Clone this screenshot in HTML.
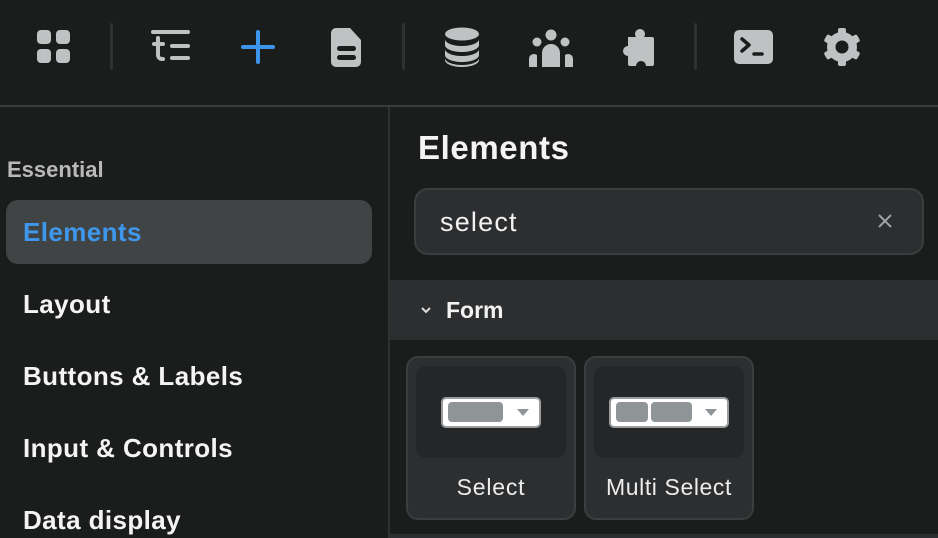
<!DOCTYPE html>
<html><head><meta charset="utf-8"><style>
*{margin:0;padding:0;box-sizing:border-box}
body{width:938px;height:538px;overflow:hidden;background:#1b1c1c;font-family:"Liberation Sans",sans-serif;color:#f2f2f2;position:relative}
.a{position:absolute}
.div{position:absolute;top:23px;width:3px;height:47px;background:#2f3132;border-radius:2px}
.side{position:absolute;left:23px;font-size:26px;font-weight:bold;color:#f4f4f4;line-height:30px;letter-spacing:0.4px}
svg{position:absolute}
</style></head><body>
<div class="a" style="left:0;top:105px;width:938px;height:2px;background:#3a3b3c"></div>
<div class="div" style="left:110px"></div>
<div class="div" style="left:402px"></div>
<div class="div" style="left:694px"></div>
<svg style="left:36px;top:29px" width="36" height="36" viewBox="0 0 36 36" fill="#bfc1c2"><rect x="1" y="1" width="14" height="14" rx="4"/><rect x="20" y="1" width="14" height="14" rx="4"/><rect x="1" y="20" width="14" height="14" rx="4"/><rect x="20" y="20" width="14" height="14" rx="4"/></svg>
<svg style="left:150px;top:28px" width="40" height="36" viewBox="0 0 40 36" fill="none" stroke="#bfc1c2" stroke-width="4" stroke-linecap="round"><path d="M3 4H38"/><path d="M8 10V27a4 4 0 0 0 4 4H13"/><path d="M4 16H13"/><path d="M22 18H38"/><path d="M22 30H38"/></svg>
<svg style="left:240px;top:29px" width="36" height="36" viewBox="0 0 36 36" stroke="#3d95ea" stroke-width="4" stroke-linecap="round"><path d="M18 3V33M3 18H33"/></svg>
<svg style="left:330px;top:27px" width="34" height="42" viewBox="0 0 34 42"><path d="M6 1H20L31 13V35a5 5 0 0 1-5 5H6a5 5 0 0 1-5-5V6a5 5 0 0 1 5-5z" fill="#bfc1c2"/><rect x="7" y="19" width="19" height="5" rx="2.5" fill="#1b1c1c"/><rect x="7" y="28" width="19" height="5" rx="2.5" fill="#1b1c1c"/></svg>
<svg style="left:444px;top:27px" width="36" height="40" viewBox="0 0 36 40" fill="#bfc1c2"><ellipse cx="18" cy="7" rx="17" ry="6.5"/><path d="M1 12c0 4 8 7 17 7s17-3 17-7v6c0 4-8 7-17 7S1 22 1 18z"/><path d="M1 22c0 4 8 7 17 7s17-3 17-7v6c0 4-8 7-17 7S1 32 1 28z"/><path d="M1 31c0 4 8 7 17 7s17-3 17-7v2c0 4-8 7-17 7S1 37 1 33z"/></svg>
<svg style="left:528px;top:29px" width="46" height="38" viewBox="0 0 46 38" fill="#bfc1c2"><circle cx="23" cy="6" r="5.5"/><circle cx="9" cy="13" r="4.5"/><circle cx="37" cy="13" r="4.5"/><path d="M14 38V24a9 9 0 0 1 18 0V38z"/><path d="M1 38V30a5 5 0 0 1 8-4V38z"/><path d="M45 38V30a5 5 0 0 0-8-4V38z"/></svg>
<svg style="left:616px;top:27px" width="42" height="42" viewBox="0 0 42 42" fill="#bfc1c2"><path d="M12 10H20A5 5 0 1 1 28 10H36a2 2 0 0 1 2 2V37a2 2 0 0 1-2 2H30A5 5 0 1 0 20 39H14a2 2 0 0 1-2-2V29A5 5 0 1 1 12 19z"/></svg>
<svg style="left:734px;top:30px" width="40" height="34" viewBox="0 0 40 34"><rect x="0" y="0" width="39" height="34" rx="5" fill="#bfc1c2"/><path d="M8 9L15 15L8 21" stroke="#1b1c1c" stroke-width="3.5" fill="none" stroke-linecap="round" stroke-linejoin="round"/><path d="M20 24H28" stroke="#1b1c1c" stroke-width="3.5" stroke-linecap="round"/></svg>
<svg style="left:822px;top:27px" width="40" height="40" viewBox="0 0 40 40"><g fill="#bfc1c2"><circle cx="20" cy="20" r="15"/><g><rect x="16" y="1" width="8" height="8" rx="2"/><rect x="16" y="31" width="8" height="8" rx="2"/><rect x="16" y="1" width="8" height="8" rx="2" transform="rotate(60 20 20)"/><rect x="16" y="1" width="8" height="8" rx="2" transform="rotate(120 20 20)"/><rect x="16" y="1" width="8" height="8" rx="2" transform="rotate(240 20 20)"/><rect x="16" y="1" width="8" height="8" rx="2" transform="rotate(300 20 20)"/></g></g><circle cx="20" cy="20" r="6.5" fill="#1b1c1c"/></svg>

<div class="a" style="left:388px;top:107px;width:2px;height:431px;background:#2f3132"></div>
<div class="a" style="left:7px;top:157px;font-size:22px;font-weight:bold;color:#b9b9b9">Essential</div>
<div class="a" style="left:6px;top:200px;width:366px;height:64px;background:#414445;border-radius:12px"></div>
<div class="side" style="top:217px;color:#3f97ec">Elements</div>
<div class="side" style="top:289px">Layout</div>
<div class="side" style="top:361px">Buttons &amp; Labels</div>
<div class="side" style="top:433px">Input &amp; Controls</div>
<div class="side" style="top:505px">Data display</div>

<div class="a" style="left:418px;top:129px;font-size:33px;font-weight:bold;color:#f4f4f4;letter-spacing:0.6px">Elements</div>
<div class="a" style="left:414px;top:188px;width:510px;height:67px;background:#2d2e30;border:2px solid #3c3d3f;border-radius:14px"></div>
<div class="a" style="left:440px;top:207px;font-size:27px;color:#f2f2f2;letter-spacing:1.2px">select</div>
<svg style="left:877px;top:213px" width="16" height="16" viewBox="0 0 16 16" stroke="#a0a2a3" stroke-width="2"><path d="M2 2L14 14M14 2L2 14"/></svg>
<div class="a" style="left:390px;top:280px;width:548px;height:60px;background:#2d2e30"></div>
<svg style="left:420px;top:305px" width="12" height="10" viewBox="0 0 12 10" stroke="#dcdcdc" stroke-width="2" fill="none"><path d="M2 3L6 7L10 3"/></svg>
<div class="a" style="left:446px;top:297px;font-size:23px;font-weight:bold;color:#f2f2f2">Form</div>

<div class="a" style="left:406px;top:356px;width:170px;height:164px;background:#2d2e30;border:2px solid #3c3d3f;border-radius:12px"></div>
<div class="a" style="left:416px;top:366px;width:150px;height:92px;background:#252628;border-radius:10px"></div>
<div class="a" style="left:441px;top:397px;width:100px;height:31px;background:#fff;border:2px solid #9a9c9d;border-radius:5px"></div>
<div class="a" style="left:448px;top:402px;width:55px;height:20px;background:#8f9597;border-radius:4px"></div>
<svg style="left:516px;top:408px" width="14" height="9" viewBox="0 0 14 9"><path d="M1 1H13L7 8z" fill="#8f9597"/></svg>
<div class="a" style="left:406px;top:474px;width:170px;text-align:center;font-size:23px;color:#ececec;letter-spacing:0.8px">Select</div>

<div class="a" style="left:584px;top:356px;width:170px;height:164px;background:#2d2e30;border:2px solid #3c3d3f;border-radius:12px"></div>
<div class="a" style="left:594px;top:366px;width:150px;height:92px;background:#252628;border-radius:10px"></div>
<div class="a" style="left:609px;top:397px;width:120px;height:31px;background:#fff;border:2px solid #9a9c9d;border-radius:5px"></div>
<div class="a" style="left:616px;top:402px;width:32px;height:20px;background:#8f9597;border-radius:4px"></div>
<div class="a" style="left:651px;top:402px;width:41px;height:20px;background:#8f9597;border-radius:4px"></div>
<svg style="left:704px;top:408px" width="14" height="9" viewBox="0 0 14 9"><path d="M1 1H13L7 8z" fill="#8f9597"/></svg>
<div class="a" style="left:584px;top:474px;width:170px;text-align:center;font-size:23px;color:#ececec;letter-spacing:0.6px">Multi Select</div>
<div class="a" style="left:390px;top:534px;width:548px;height:4px;background:#2d2e30"></div>
</body></html>
